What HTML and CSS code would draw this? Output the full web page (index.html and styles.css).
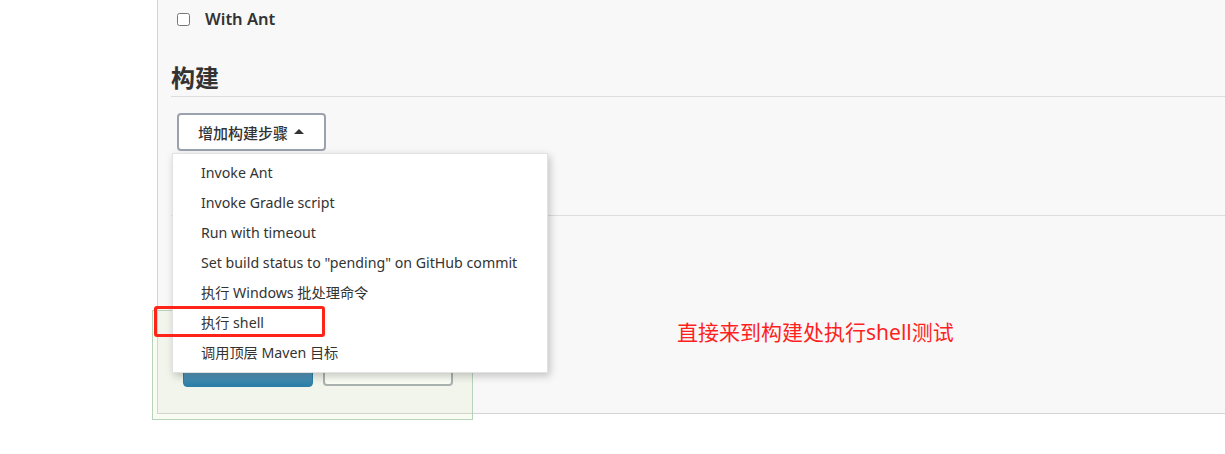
FILE: index.html
```html
<!DOCTYPE html>
<html lang="zh-CN">
<head>
<meta charset="utf-8">
<title>构建</title>
<link rel="stylesheet" href="styles.css">
</head>
<body>
<div class="page">
  <div class="gutter"></div>
  <main class="panel">
    <div class="opt-row">
      <input type="checkbox" class="cb" id="withant">
      <label for="withant" class="opt-label">With Ant</label>
    </div>
    <section class="build">
      <h2 class="section-title">构建</h2>
      <div class="step-area">
        <button class="add-step" type="button">增加构建步骤<span class="caret"></span></button>
        <ul class="menu">
          <li class="menu-item">Invoke Ant</li>
          <li class="menu-item">Invoke Gradle script</li>
          <li class="menu-item">Run with timeout</li>
          <li class="menu-item">Set build status to "pending" on GitHub commit</li>
          <li class="menu-item">执行 Windows 批处理命令</li>
          <li class="menu-item">执行 shell</li>
          <li class="menu-item">调用顶层 Maven 目标</li>
        </ul>
      </div>
    </section>
    <section class="post"></section>
    <div class="bottom-bar">
      <button class="btn btn-primary" type="button">保存</button>
      <button class="btn btn-secondary" type="button">应用</button>
    </div>
  </main>
</div>
<div class="sticker-highlight"></div>
<div class="mark-box"></div>
<p class="annotation">直接来到构建处执行shell测试</p>
</body>
</html>
```

FILE: styles.css
```css
html, body {
  margin: 0;
  padding: 0;
  background: #ffffff;
}
body {
  font-family: "Noto Sans", "Noto Sans CJK SC", sans-serif;
  color: #333333;
  position: relative;
  width: 1225px;
  height: 454px;
  overflow: hidden;
}
.page {
  display: flex;
  align-items: flex-start;
}
.gutter {
  width: 157px;
  flex: none;
}
.panel {
  flex: 1;
  background: #f8f8f8;
  border-left: 1px solid #d3d3d3;
  border-bottom: 1px solid #d3d3d3;
  padding-left: 13px;
  display: flex;
  flex-direction: column;
}
.opt-row {
  display: flex;
  align-items: center;
  height: 22px;
  margin-top: 8px;
  padding-left: 6px;
}
.cb {
  width: 13px;
  height: 13px;
  margin: 0 15px 0 0;
}
.opt-label {
  font-size: 16.5px;
  font-weight: 600;
  line-height: 22px;
  color: #333;
}
.build {
  display: flex;
  flex-direction: column;
}
.section-title {
  margin: 32px 0 0 0;
  font-family: "Noto Sans CJK SC", sans-serif;
  font-size: 24px;
  font-weight: 700;
  line-height: 30px;
  padding-bottom: 4px;
  border-bottom: 1px solid #dddddd;
  color: #333;
}
.step-area {
  position: relative;
  margin-top: 16px;
  padding-left: 6px;
  height: 38px;
  padding-bottom: 64px;
  border-bottom: 1px solid #dddddd;
}
.add-step {
  width: 149px;
  height: 38px;
  box-sizing: border-box;
  background: #ffffff;
  border: 2px solid #9aa3ad;
  border-radius: 4px;
  font-family: "Noto Sans CJK SC", sans-serif;
  font-size: 15px;
  font-weight: 500;
  color: #333;
  padding: 0 0 0 19px;
  display: flex;
  align-items: center;
  gap: 6px;
}
.caret {
  width: 0;
  height: 0;
  border-left: 5px solid transparent;
  border-right: 5px solid transparent;
  border-bottom: 5px solid #333;
  margin-top: -1px;
}
.menu {
  position: absolute;
  left: 1px;
  top: 40px;
  width: 376px;
  margin: 0;
  padding: 4px 0;
  list-style: none;
  background: #ffffff;
  border: 1px solid #e2e2e2;
  box-sizing: border-box;
  box-shadow: 2px 3px 8px rgba(0, 0, 0, 0.22);
  z-index: 5;
}
.menu-item {
  height: 30px;
  line-height: 30px;
  padding-left: 28px;
  font-size: 14.2px;
  color: #333;
  white-space: nowrap;
}
.post {
  height: 130px;
}
.bottom-bar {
  display: flex;
  gap: 10px;
  padding: 0 0 26px 12px;
  align-items: flex-end;
}
.btn {
  width: 130px;
  height: 40px;
  border-radius: 4px;
  font-family: "Noto Sans CJK SC", sans-serif;
  font-size: 14px;
  padding-bottom: 8px;
}
.btn-primary {
  background: linear-gradient(#b5cfe2 0%, #5f9cc6 50%, #1570aa 100%);
  border: 1px solid #1570aa;
  color: #fff;
}
.btn-secondary {
  background: #ffffff;
  border: 2px solid #a5abb2;
  color: #333;
  margin-bottom: 1px;
}
.sticker-highlight {
  position: absolute;
  left: 152px;
  top: 310px;
  width: 319px;
  height: 108px;
  border: 1px solid #b7d3bb;
  background: rgba(208, 228, 158, 0.12);
  z-index: 2;
}
.mark-box {
  position: absolute;
  left: 154px;
  top: 306px;
  width: 165px;
  height: 25px;
  border: 3px solid #ff2418;
  border-radius: 3px;
  z-index: 6;
}
.annotation {
  position: absolute;
  left: 677px;
  top: 317px;
  margin: 0;
  font-family: "Noto Sans", "Noto Sans CJK SC", sans-serif;
  font-size: 21px;
  line-height: 30px;
  font-weight: 400;
  color: #ff1f1f;
}
```
